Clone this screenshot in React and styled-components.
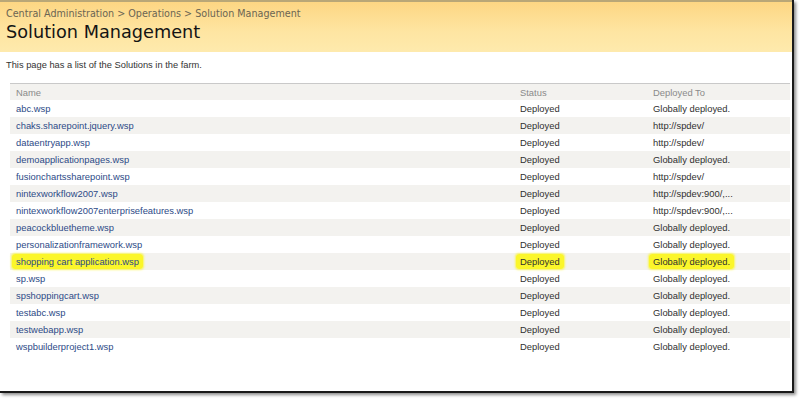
import React from "react";
import styled, { createGlobalStyle } from "styled-components";

const GlobalStyle = createGlobalStyle`
  html, body {
    margin: 0;
    padding: 0;
    background: #ffffff;
  }
  body {
    width: 800px;
    height: 399px;
    overflow: hidden;
  }
`;

const Frame = styled.div`
  width: 792px;
  height: 391px;
  background: #fff;
  border-right: 2px solid #1a1a1a;
  border-bottom: 2px solid #1a1a1a;
  box-shadow: 2px 2px 3px rgba(0, 0, 0, 0.45);
  overflow: hidden;
  display: flex;
  flex-direction: column;
`;

const Header = styled.div`
  height: 52px;
  box-sizing: border-box;
  border-top: 2px solid #b9a777;
  background: linear-gradient(180deg, #fdd683 0%, #fee5a2 60%, #feeaad 100%);
  padding: 5px 0 0 6px;
  display: flex;
  flex-direction: column;
`;

const Crumbs = styled.div`
  font-family: "DejaVu Sans", Verdana, sans-serif;
  font-size: 9.6px;
  line-height: 14px;
  color: #6b6553;
`;

const Title = styled.h1`
  margin: 0;
  font-family: "DejaVu Sans", Verdana, sans-serif;
  font-weight: normal;
  font-size: 17.7px;
  line-height: 23px;
  color: #141414;
`;

const Body = styled.div`
  padding: 7px 10px 0 10px;
  font-family: "Liberation Sans", Tahoma, sans-serif;
`;

const Intro = styled.p`
  margin: 0 0 0 -4px;
  font-size: 9.3px;
  line-height: 12px;
  color: #333;
`;

const Table = styled.div`
  margin-top: 12px;
  border-top: 1px solid #c9c9c9;
  width: 780px;
`;

const Row = styled.div`
  display: grid;
  grid-template-columns: 504px 133px 1fr;
  height: ${(p) => (p.$head ? "16px" : "17px")};
  align-items: center;
  background: ${(p) => (p.$shade ? "#f3f2ef" : "#fff")};
  font-size: 9.4px;
  padding-left: 6px;
`;

const HeadCell = styled.div`
  color: #8a8a8a;
`;

const NameCell = styled.div`
  color: #2d4a87;
`;

const TextCell = styled.div`
  color: #303030;
`;

const Marker = styled.span`
  background: #fbf62a;
  border-radius: 3px;
  padding: 2px 4px;
  margin-left: -4px;
  box-shadow: 0 0 2px 1px rgba(251, 246, 42, 0.7);
`;

const solutions = [
  ["abc.wsp", "Globally deployed."],
  ["chaks.sharepoint.jquery.wsp", "http://spdev/"],
  ["dataentryapp.wsp", "http://spdev/"],
  ["demoapplicationpages.wsp", "Globally deployed."],
  ["fusionchartssharepoint.wsp", "http://spdev/"],
  ["nintexworkflow2007.wsp", "http://spdev:900/,..."],
  ["nintexworkflow2007enterprisefeatures.wsp", "http://spdev:900/,..."],
  ["peacockbluetheme.wsp", "Globally deployed."],
  ["personalizationframework.wsp", "Globally deployed."],
  ["shopping cart application.wsp", "Globally deployed.", true],
  ["sp.wsp", "Globally deployed."],
  ["spshoppingcart.wsp", "Globally deployed."],
  ["testabc.wsp", "Globally deployed."],
  ["testwebapp.wsp", "Globally deployed."],
  ["wspbuilderproject1.wsp", "Globally deployed."],
];

function Mark({ on, children }) {
  return on ? <Marker>{children}</Marker> : children;
}

export default function App() {
  return (
    <>
      <GlobalStyle />
      <Frame>
        <Header>
          <Crumbs>Central Administration &gt; Operations &gt; Solution Management</Crumbs>
          <Title>Solution Management</Title>
        </Header>
        <Body>
          <Intro>This page has a list of the Solutions in the farm.</Intro>
          <Table>
            <Row $head $shade>
              <HeadCell>Name</HeadCell>
              <HeadCell>Status</HeadCell>
              <HeadCell>Deployed To</HeadCell>
            </Row>
            {solutions.map(([name, target, hl], i) => (
              <Row key={name} $shade={i % 2 === 1}>
                <NameCell>
                  <Mark on={hl}>{name}</Mark>
                </NameCell>
                <TextCell>
                  <Mark on={hl}>Deployed</Mark>
                </TextCell>
                <TextCell>
                  <Mark on={hl}>{target}</Mark>
                </TextCell>
              </Row>
            ))}
          </Table>
        </Body>
      </Frame>
    </>
  );
}
